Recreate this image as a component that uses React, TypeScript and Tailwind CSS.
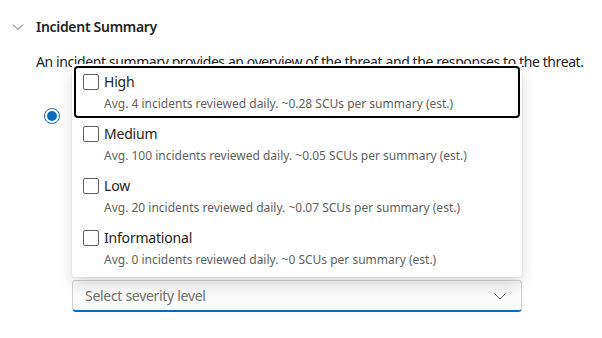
import React from "react";

const items = [
  { label: "High", desc: "Avg. 4 incidents reviewed daily. ~0.28 SCUs per summary (est.)", active: true },
  { label: "Medium", desc: "Avg. 100 incidents reviewed daily. ~0.05 SCUs per summary (est.)" },
  { label: "Low", desc: "Avg. 20 incidents reviewed daily. ~0.07 SCUs per summary (est.)" },
  { label: "Informational", desc: "Avg. 0 incidents reviewed daily. ~0 SCUs per summary (est.)" },
];

export default function App() {
  return (
    <div
      className="relative w-[602px] h-[338px] bg-white text-[#242424] overflow-hidden"
      style={{ fontFamily: '"Segoe UI", "Noto Sans", "Open Sans", sans-serif' }}
    >
      <div className="flex items-center h-[20px] mt-[17px] pl-[12px]">
        <svg width="12" height="12" viewBox="0 0 12 12" className="text-[#616161]">
          <path d="M1 3.5 L6 8.5 L11 3.5" fill="none" stroke="currentColor" strokeWidth="1" />
        </svg>
        <span className="ml-[12px] text-[14px] font-semibold leading-[20px] tracking-[-0.3px]">Incident Summary</span>
      </div>
      <div className="pl-[36px] mt-[15px] text-[14px] leading-[20px] tracking-[-0.4px] whitespace-nowrap">
        An incident summary provides an overview of the threat and the responses to the threat.
      </div>
      <div className="pl-[44px] mt-[36px] flex items-center h-[16px]">
        <div className="w-[16px] h-[16px] rounded-full border border-[#0f6cbd] flex items-center justify-center">
          <div className="w-[10px] h-[10px] rounded-full bg-[#0f6cbd]" />
        </div>
      </div>
      <div className="ml-[72px] mt-[156px] w-[450px] h-[32px] rounded-[4px] border border-[#d1d1d1] border-b-[#0f6cbd] border-b-2 bg-[#fbfbfb] flex items-center pl-[12px] pr-[14px]">
        <span className="flex-1 text-[14px] text-[#707070] leading-[20px] tracking-[-0.3px]">Select severity level</span>
        <svg width="14" height="14" viewBox="0 0 14 14" className="text-[#616161]">
          <path d="M1.5 4.5 L7 10 L12.5 4.5" fill="none" stroke="currentColor" strokeWidth="1" />
        </svg>
      </div>

      <div className="absolute left-[72px] top-[64px] w-[450px] h-[213px] bg-white rounded-b-[4px] shadow-[0_0_2px_rgba(0,0,0,0.12),0_8px_16px_rgba(0,0,0,0.14)] p-[2px] flex flex-col">
        {items.map((it) => (
          <div
            key={it.label}
            className={
              "h-[52px] rounded-[4px] flex " +
              (it.active ? "border-2 border-black pl-[7px] pt-[6px]" : "pl-[9px] pt-[8px]")
            }
          >
            <div className="w-[16px] h-[16px] rounded-[2px] border border-[#616161] shrink-0" />
            <div className="ml-[5px] flex flex-col">
              <span className="text-[14px] leading-[20px] -mt-[2px] tracking-[-0.2px]">{it.label}</span>
              <span className="text-[12px] leading-[16px] text-[#616161] mt-[4px]">{it.desc}</span>
            </div>
          </div>
        ))}
      </div>
    </div>
  );
}
